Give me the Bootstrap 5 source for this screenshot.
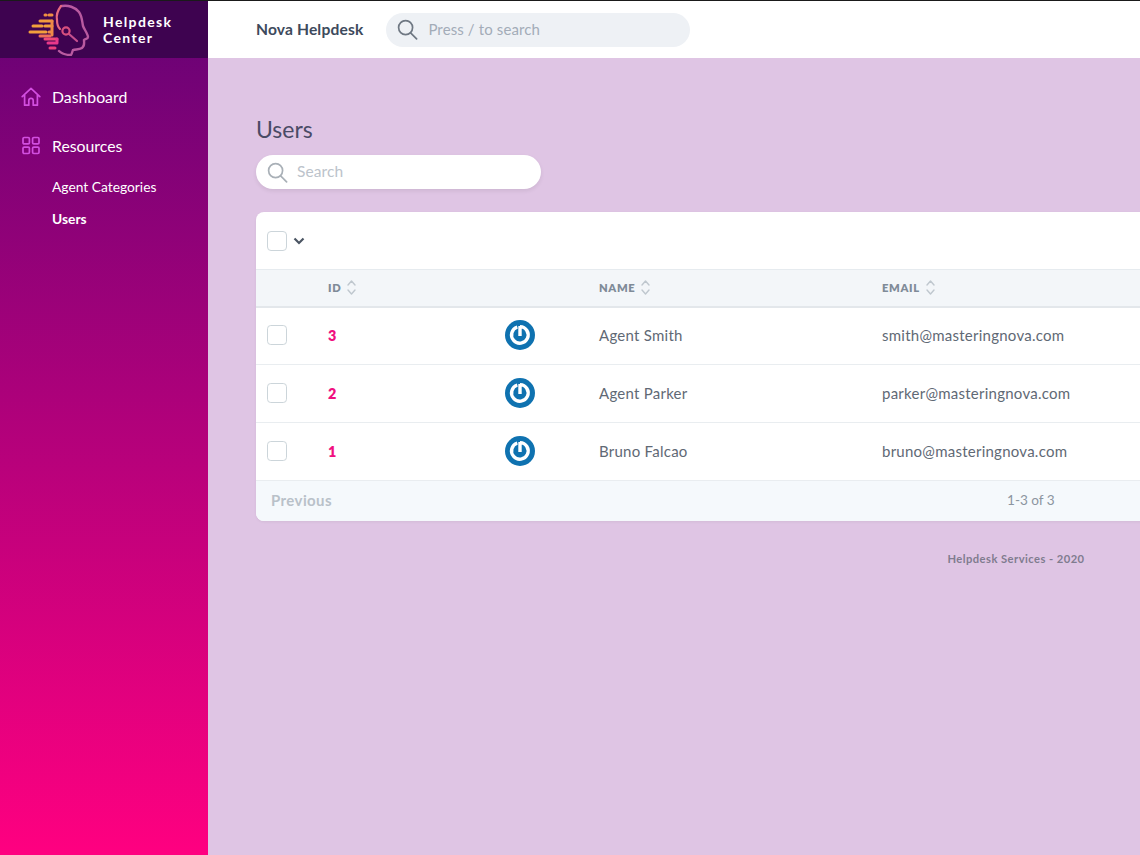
<!DOCTYPE html>
<html lang="en">
<head>
  <meta charset="UTF-8" />
  <meta name="viewport" content="width=device-width, initial-scale=1" />
  <title>Users - Nova Helpdesk</title>
  <link href="https://cdn.jsdelivr.net/npm/bootstrap@5.3.0/dist/css/bootstrap.min.css" rel="stylesheet" />
  <style>
    html, body {
      height: 100%;
      overflow: hidden;
    }

    body {
      font-family: "Lato", "Noto Sans", sans-serif;
      background-color: #dfc5e4;
      color: #3c4655;
      border-top: 1px solid #1a1a1a;
    }

    .side-bar {
      width: 208px;
      flex: 0 0 208px;
      background: linear-gradient(180deg, #650275 0%, #ff0080 100%);
    }

    .brand-box {
      height: 57px;
      background-color: #3e0350;
      padding-left: 28px;
      gap: 13px;
    }

    .brand-name {
      color: #fff;
      font-size: 14px;
      line-height: 16px;
      font-weight: 700;
      letter-spacing: 1.35px;
    }

    .side-menu {
      padding: 27px 0 0 21px;
    }

    .menu-head {
      color: #fff;
      font-size: 15.8px;
      line-height: 24px;
      gap: 11px;
      text-decoration: none;
      margin-bottom: 25px;
    }

    .menu-head.tight {
      margin-bottom: 19px;
    }

    .menu-sub {
      display: block;
      color: #fff;
      font-size: 13.8px;
      line-height: 20px;
      padding-left: 31px;
      margin-bottom: 12px;
      text-decoration: none;
    }

    .menu-sub.current {
      font-weight: 700;
    }

    .top-bar {
      height: 57px;
      background-color: #fff;
      padding-left: 48px;
      gap: 23px;
    }

    .app-name {
      font-size: 15.6px;
      letter-spacing: 0.15px;
      font-weight: 700;
      color: #3d4a5c;
    }

    .pill-search {
      height: 34px;
      border-radius: 17px;
      gap: 9px;
      padding-left: 11px;
    }

    .pill-search.in-header {
      width: 304px;
      gap: 10px;
      background-color: #eef1f5;
    }

    .pill-search.in-page {
      width: 285px;
      background-color: #fff;
      box-shadow: 0 2px 4px rgba(0, 0, 0, 0.08);
    }

    .pill-search input {
      border: 0;
      outline: 0;
      background: transparent;
      font-size: 15px;
      letter-spacing: 0.12px;
      padding: 0;
      width: 200px;
    }

    .in-header input::placeholder {
      color: #a3acb8;
    }

    .in-page input {
      font-size: 15.5px;
    }

    .in-page input::placeholder {
      color: #bcc3cb;
    }

    .page-body {
      width: 1520px;
      padding: 56px 0 0 48px;
      box-sizing: content-box;
    }

    .page-title {
      font-size: 23px;
      line-height: 30px;
      font-weight: 400;
      color: #4a4b66;
      margin-bottom: 11px;
    }

    .user-panel {
      background-color: #fff;
      border-radius: 8px;
      margin-top: 23px;
      overflow: hidden;
      box-shadow: 0 1px 3px rgba(0, 0, 0, 0.06);
    }

    .panel-tools {
      height: 57px;
      padding-left: 11px;
      gap: 6px;
    }

    .tick {
      width: 20px;
      height: 20px;
      margin: 0;
      flex: none;
      border: 1px solid #ccd5da;
      border-radius: 4px;
      display: block;
    }

    .user-table {
      margin: 0;
      table-layout: fixed;
      width: 100%;
    }

    .user-table th {
      height: 37px;
      padding: 2px 0 0;
      vertical-align: middle;
      background-color: #f3f6f9;
      color: #7f8b98;
      font-size: 11.2px;
      font-weight: 800;
      letter-spacing: 0.65px;
      border-top: 1px solid #e6ebef;
      border-bottom: 2px solid #e3e7eb;
    }

    .user-table td {
      height: 58px;
      padding: 0 0 1px;
      vertical-align: middle;
      color: #5f6975;
      font-size: 15px;
      letter-spacing: 0.25px;
      border-bottom: 1px solid #e9edf0;
    }

    .cell-tick {
      padding-left: 11px !important;
    }

    .id-link {
      color: #f0107f;
      font-weight: 800;
      font-size: 14.4px;
      text-decoration: none;
    }

    .sort-mark {
      margin-left: 6px;
      vertical-align: -3px;
    }

    .panel-foot {
      height: 40px;
      padding-bottom: 1px;
      background-color: #f5f9fc;
    }

    .prev-link {
      color: #b9c1c9;
      font-weight: 700;
      font-size: 15px;
      letter-spacing: 0.4px;
      margin-left: 15px;
      flex: 0 0 736px;
    }

    .page-count {
      color: #8c95a0;
      font-size: 13.6px;
    }

    .foot-note {
      color: #7f7c8f;
      font-size: 11.2px;
      font-weight: 700;
      letter-spacing: 0.45px;
      margin-top: 30px;
    }
  </style>
</head>
<body class="d-flex">
  <!-- sidebar -->
  <aside class="side-bar">
    <div class="brand-box d-flex align-items-center">
      <svg width="62" height="52" viewBox="0 0 62 52" fill="none">
        <!-- speed lines -->
        <g stroke-width="3" stroke-linecap="round">
          <path d="M17 11h1M21 11h3" stroke="#ef8f42"/>
          <path d="M12 17h12" stroke="#f09a3e"/>
          <path d="M5 22h9M17 22h7" stroke="#f2a03c"/>
          <path d="M2 28h16" stroke="#f2a03c"/>
          <path d="M24 17v14M21 28h3" stroke="#f08a48"/>
          <path d="M12 32h10" stroke="#f0705a"/>
          <path d="M17 35h12" stroke="#ee4a78"/>
          <path d="M29 35v4M20 39h9" stroke="#e8388a"/>
          <path d="M22 44h5" stroke="#e8407e"/>
        </g>
        <!-- head -->
        <path d="M34 2c6-1 13 1 17 6 3 4 3 9 4 14 1 3 5 8 5 11 0 2-3 2-4 3 0 3 1 6-2 8-3 2-7 1-9 2-1 2-1 4-2 5-4 0-9-1-12-4" stroke="#b95aa0" stroke-width="2.4" stroke-linecap="round"/>
        <path d="M33 2c-3 4-5 9-4 14 0 3 1 7 3 9" stroke="#e56a80" stroke-width="2.2" stroke-linecap="round"/>
        <path d="M41 30l8 7" stroke="#c6508e" stroke-width="2.2" stroke-linecap="round"/>
        <circle cx="38" cy="27" r="3.6" stroke="#d8507e" stroke-width="2.2"/>
      </svg>
      <div class="brand-name">Helpdesk<br />Center</div>
    </div>
    <nav class="side-menu">
      <a href="#" class="menu-head d-flex align-items-center">
        <svg width="20" height="20" viewBox="0 0 20 20" fill="none" stroke="#d24fe0" stroke-width="1.7" stroke-linejoin="round" stroke-linecap="round">
          <path d="M1.2 9.6 10 1.4l8.8 8.2M3.6 8v10.2h4.2v-4.6a2.2 2.2 0 0 1 4.4 0v4.6h4.2V8"/>
        </svg>
        Dashboard
      </a>
      <a href="#" class="menu-head tight d-flex align-items-center">
        <svg width="20" height="20" viewBox="0 0 20 20" fill="none" stroke="#d24fe0" stroke-width="1.7">
          <rect x="2" y="1.5" width="6.4" height="6.4" rx="1.2"/>
          <rect x="11.6" y="1.5" width="6.4" height="6.4" rx="1.2"/>
          <rect x="2" y="11.1" width="6.4" height="6.4" rx="1.2"/>
          <rect x="11.6" y="11.1" width="6.4" height="6.4" rx="1.2"/>
        </svg>
        Resources
      </a>
      <a href="#" class="menu-sub">Agent Categories</a>
      <a href="#" class="menu-sub current">Users</a>
    </nav>
  </aside>

  <div class="flex-grow-1">
    <!-- top bar -->
    <header class="top-bar d-flex align-items-center">
      <span class="app-name">Nova Helpdesk</span>
      <label class="pill-search in-header d-flex align-items-center">
        <svg width="21" height="21" viewBox="0 0 21 21" fill="none" stroke="#6f7883" stroke-width="1.7" stroke-linecap="round">
          <circle cx="8.6" cy="8.6" r="7"/><path d="m13.6 13.8 6 6"/>
        </svg>
        <input type="text" placeholder="Press / to search" />
      </label>
    </header>

    <main class="page-body">
      <h1 class="page-title">Users</h1>
      <label class="pill-search in-page d-flex align-items-center">
        <svg width="21" height="21" viewBox="0 0 21 21" fill="none" stroke="#a9b0b7" stroke-width="1.7" stroke-linecap="round">
          <circle cx="8.6" cy="8.6" r="7"/><path d="m13.6 13.8 6 6"/>
        </svg>
        <input type="text" placeholder="Search" />
      </label>

      <section class="user-panel">
        <div class="panel-tools d-flex align-items-center">
          <input class="tick form-check-input" type="checkbox" aria-label="Select all" />
          <svg width="12" height="8" viewBox="0 0 12 8" fill="none" stroke="#4b5563" stroke-width="2.2"><path d="m1.5 1.5 4.5 4.5 4.5-4.5"/></svg>
        </div>
        <table class="user-table table">
          <colgroup>
            <col style="width:72px" />
            <col style="width:177px" />
            <col style="width:94px" />
            <col style="width:283px" />
            <col />
          </colgroup>
          <thead>
            <tr>
              <th></th>
              <th>ID<svg class="sort-mark" width="9" height="15" viewBox="0 0 9 15" fill="none" stroke="#bfc7ce" stroke-width="1.4" stroke-linecap="round" stroke-linejoin="round"><path d="m1 5 3.500-4 3.500 4M1 10l3.500 4 3.500-4"/></svg></th>
              <th></th>
              <th>NAME<svg class="sort-mark" width="9" height="15" viewBox="0 0 9 15" fill="none" stroke="#bfc7ce" stroke-width="1.4" stroke-linecap="round" stroke-linejoin="round"><path d="m1 5 3.500-4 3.500 4M1 10l3.500 4 3.500-4"/></svg></th>
              <th>EMAIL<svg class="sort-mark" width="9" height="15" viewBox="0 0 9 15" fill="none" stroke="#bfc7ce" stroke-width="1.4" stroke-linecap="round" stroke-linejoin="round"><path d="m1 5 3.500-4 3.500 4M1 10l3.500 4 3.500-4"/></svg></th>
            </tr>
          </thead>
          <tbody>
            <tr>
              <td class="cell-tick"><input class="tick form-check-input" type="checkbox" aria-label="Select" /></td>
              <td><a href="#" class="id-link">3</a></td>
              <td>
                <svg width="30" height="30" viewBox="0 0 30 30" fill="none"><circle cx="15" cy="15" r="15" fill="#0f72b0"/><path d="M15 6v10M12.300 7a8.300 8.300 0 1 0 2.700-.4" stroke="#fff" stroke-width="3.400"/></svg>
              </td>
              <td>Agent Smith</td>
              <td>smith@masteringnova.com</td>
            </tr>
            <tr>
              <td class="cell-tick"><input class="tick form-check-input" type="checkbox" aria-label="Select" /></td>
              <td><a href="#" class="id-link">2</a></td>
              <td>
                <svg width="30" height="30" viewBox="0 0 30 30" fill="none"><circle cx="15" cy="15" r="15" fill="#0f72b0"/><path d="M15 6v10M12.300 7a8.300 8.300 0 1 0 2.700-.4" stroke="#fff" stroke-width="3.400"/></svg>
              </td>
              <td>Agent Parker</td>
              <td>parker@masteringnova.com</td>
            </tr>
            <tr>
              <td class="cell-tick"><input class="tick form-check-input" type="checkbox" aria-label="Select" /></td>
              <td><a href="#" class="id-link">1</a></td>
              <td>
                <svg width="30" height="30" viewBox="0 0 30 30" fill="none"><circle cx="15" cy="15" r="15" fill="#0f72b0"/><path d="M15 6v10M12.300 7a8.300 8.300 0 1 0 2.700-.4" stroke="#fff" stroke-width="3.400"/></svg>
              </td>
              <td>Bruno Falcao</td>
              <td>bruno@masteringnova.com</td>
            </tr>
          </tbody>
        </table>
        <div class="panel-foot d-flex align-items-center">
          <span class="prev-link">Previous</span>
          <span class="page-count">1-3 of 3</span>
        </div>
      </section>
      <p class="foot-note text-center">Helpdesk Services - 2020</p>
    </main>
  </div>

  <script src="https://cdn.jsdelivr.net/npm/bootstrap@5.3.0/dist/js/bootstrap.bundle.min.js"></script>
</body>
</html>
